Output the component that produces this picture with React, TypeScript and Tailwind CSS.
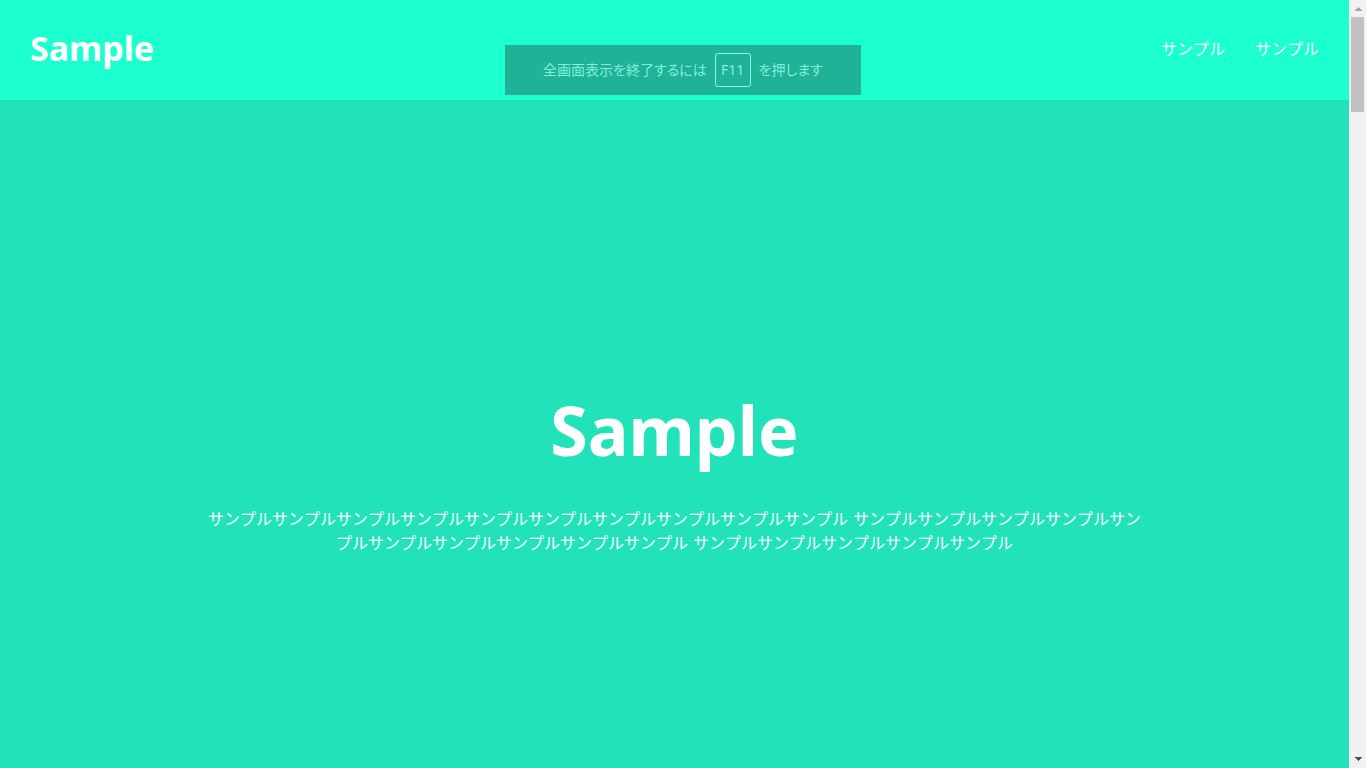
const repeat = (count: number) => 'サンプル'.repeat(count);

const lead = [repeat(10), repeat(10), repeat(5)].join(' ');

function FullscreenNotice() {
  return (
    <div
      role="status"
      className="absolute top-[45px] left-1/2 flex h-[50px] w-[356px] -translate-x-1/2 items-center justify-center gap-2 bg-[#20b297] font-['Noto_Sans','Noto_Sans_CJK_JP',sans-serif] text-sm whitespace-nowrap text-[#7ff0da] [font-feature-settings:'palt']"
    >
      <span>全画面表示を終了するには</span>
      <kbd className="flex h-[34px] w-9 items-center justify-center rounded-[3px] border border-[#80ffe6] font-['Noto_Sans',sans-serif] text-sm">
        F11
      </kbd>
      <span>を押します</span>
    </div>
  );
}

function Scrollbar() {
  return (
    <div aria-hidden="true" className="flex w-[17px] shrink-0 flex-col bg-[#f1f1f1] px-px pl-[2px]">
      <div className="flex h-[17px] items-center justify-center">
        <svg width="7" height="4" viewBox="0 0 7 4" shapeRendering="crispEdges">
          <path d="M3 0h1v1h1v1h1v1h1v1H0V3h1V2h1V1h1z" fill="#a3a3a3" />
        </svg>
      </div>
      <div className="h-[95px] w-[13px] bg-[#c1c1c1]" />
      <div className="mt-auto flex h-[17px] items-center justify-center pb-px">
        <svg width="7" height="4" viewBox="0 0 7 4" shapeRendering="crispEdges">
          <path d="M0 0h7v1H6v1H5v1H4v1H3V3H2V2H1V1H0z" fill="#505050" />
        </svg>
      </div>
    </div>
  );
}

export default function App() {
  return (
    <div className="relative flex h-screen overflow-hidden font-['DejaVu_Sans','Noto_Sans_CJK_JP',sans-serif] text-base text-white [font-kerning:none]">
      <div className="flex min-w-0 flex-1 flex-col">
        <header className="flex h-[100px] shrink-0 items-center justify-between bg-[#1cffcf] px-[30px]">
          <a href="#" className="pb-1 font-['Noto_Sans',sans-serif] text-[34px] leading-[50px] font-bold">
            Sample
          </a>
          <nav className="flex gap-[30px] leading-6">
            <a href="#first">サンプル</a>
            <a href="#second">サンプル</a>
          </nav>
        </header>
        <main className="flex flex-1 flex-col items-center justify-center bg-[#22e2ba] pt-[70px]">
          <h1 className="font-['Noto_Sans',sans-serif] text-[68px] leading-[96px] font-bold">Sample</h1>
          <p className="mt-[30px] w-[70%] text-center leading-6">{lead}</p>
        </main>
      </div>
      <Scrollbar />
      <FullscreenNotice />
    </div>
  );
}
